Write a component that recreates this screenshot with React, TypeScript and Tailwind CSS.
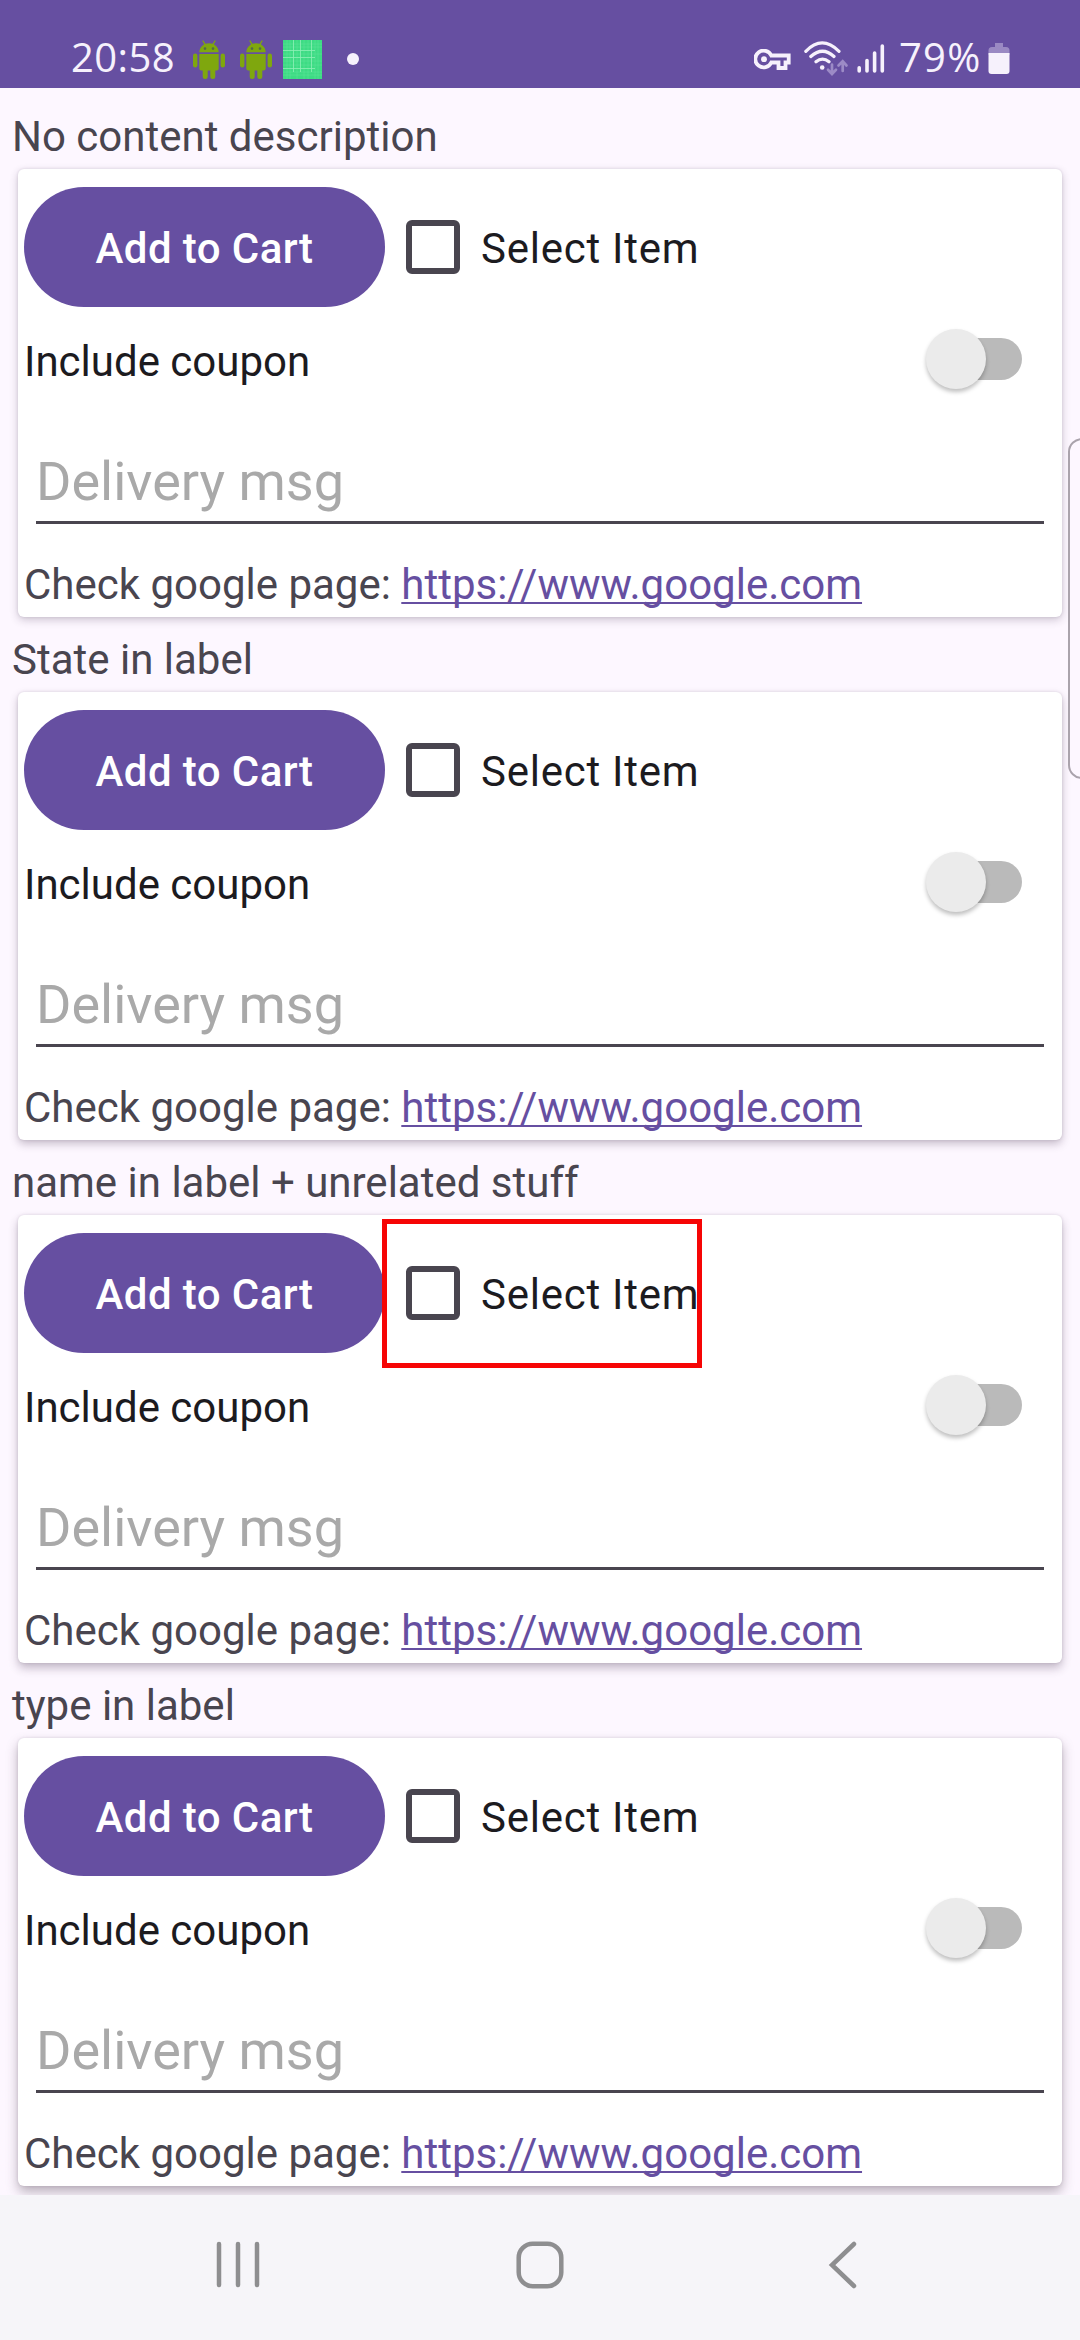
import React from 'react';

function AndroidBot() {
  return (
    <svg className="h-[40px] w-[34px] shrink-0" viewBox="0 0 34 40" fill="#7fa70e">
      <path d="M11 1l3 5M23 1l-3 5" stroke="#7fa70e" strokeWidth="1.3" strokeLinecap="round" fill="none" />
      <path d="M7.3 12.3C7.5 6.700 12 3.300 17 3.300S26.500 6.700 26.700 12.300Z" />
      <circle cx="13" cy="8.600" r="1.300" fill="#536a4c" />
      <circle cx="21" cy="8.600" r="1.300" fill="#536a4c" />
      <path d="M7.300 14H26.700V28.500Q26.700 30.500 24.700 30.500H23.300V36.500A2.500 2.500 0 0 1 18.300 36.500V30.500H15.700V36.500A2.500 2.500 0 0 1 10.700 36.500V30.500H9.300Q7.300 30.500 7.300 28.500Z" />
      <rect x="1" y="13.600" width="4.400" height="13.800" rx="2.200" />
      <rect x="28.600" y="13.600" width="4.400" height="13.800" rx="2.200" />
    </svg>
  );
}

function GridIcon() {
  return (
    <svg className="ml-[10px] h-[39px] w-[39px] shrink-0" viewBox="0 0 39 39">
      <rect width="39" height="39" fill="#3ddc84" />
      <path d="M4 0V39M7 0V39M14 0V39M21 0V39M25 0V39M32 0V39M35 0V39M0 4H39M0 7H39M0 14H39M0 21H39M0 25H39M0 32H39M0 35H39" stroke="#5be398" strokeWidth=".6" />
      <path d="M10.500 0V32M17.500 0V32M28.500 0V32M0 10.500H32M0 17.500H32M0 28.500H32" stroke="#8ff0b8" strokeWidth=".8" />
    </svg>
  );
}

function StatusBar() {
  return (
    <header className="flex h-[88px] shrink-0 items-start bg-[#664fa1] font-['Open_Sans'] text-[40px] leading-[40px] text-[#f6f1fc]">
      <span className="ml-[71px] mt-[37px] w-[121px] tracking-[0.4px]">20:58</span>
      <div className="mt-[40px] flex">
        <AndroidBot />
        <div className="ml-[13px] flex">
          <AndroidBot />
        </div>
        <GridIcon />
      </div>
      <div className="ml-[25px] mt-[53px] size-[12px] rounded-full bg-[#f6f1fc]" />
      <svg className="ml-auto mt-[49px] h-[22px] w-[37px]" viewBox="0 0 37 22" fill="none" stroke="#f6f1fc" strokeWidth="3.800">
        <path d="M17.300 6.500H34.700V13.500H31.500V19H24.500V13.500H17.300A8.400 8.400 0 1 1 17.300 6.500Z" />
        <circle cx="10" cy="10.200" r="2.900" fill="#f6f1fc" stroke="none" />
      </svg>
      <svg className="ml-[13px] mt-[41px] h-[36px] w-[45px]" viewBox="0 0 45 36" fill="none" stroke="#f6f1fc" strokeWidth="3.200" strokeLinecap="round">
        <path d="M1.800 10.300Q18 -6.500 35 10.300M6.800 15.500Q18.500 5 30 15.500M12 20.800Q18.500 15.300 25 20.800" />
        <circle cx="18.200" cy="26.500" r="2.300" fill="#f6f1fc" stroke="none" />
        <path d="M28 23.500V32M24 28.800L28 33L32 28.800M38.700 30V20.500M34.500 24.500L38.700 20.300L42.500 24.500" stroke="#9c8bc6" strokeWidth="2.700" />
      </svg>
      <svg className="ml-[8px] mt-[43px] h-[31px] w-[28px]" viewBox="0 0 28 31" stroke="#f6f1fc" strokeWidth="3.600" strokeLinecap="round">
        <path d="M2.200 24.800V28M10 17.500V28M17.600 10V28M25.300 3V28" />
      </svg>
      <span className="ml-[14px] mt-[37px] w-[89px] tracking-[1.2px]">79%</span>
      <svg className="mr-[70px] mt-[43px] h-[32px] w-[22px]" viewBox="0 0 22 32">
        <path d="M7 0H15V4H18Q21.500 4 21.500 7.500V12H.5V7.500Q.5 4 4 4H7Z" fill="#9a89c3" />
        <path d="M.5 10H21.500V28Q21.500 31 18.500 31H3.500Q.5 31 .5 28Z" fill="#f6f1fc" />
      </svg>
    </header>
  );
}

interface SectionProps {
  title: string;
  shadow: string;
  highlighted?: boolean;
}

function Section({ title, shadow, highlighted }: SectionProps) {
  return (
    <section className="h-[523px]">
      <h2 className="h-[75px] whitespace-nowrap pl-[12px] pt-[18px] text-[42px] leading-[50px] text-[#49454f]">{title}</h2>
      <div className={`ml-[18px] h-[448px] w-[1044px] rounded-[6px] bg-white pl-[6px] pt-[18px] ${shadow}`}>
        <div className="flex h-[120px] items-center">
          <button className="h-[120px] w-[361px] shrink-0 rounded-full bg-[#664fa1] pt-[3px] text-[42px] font-medium leading-[50px] tracking-[0.42px] text-white">
            Add to Cart
          </button>
          <label className="relative flex h-[54px] items-center">
            <span className="ml-[21px] size-[54px] rounded-[6px] border-[6px] border-[#49454f]" />
            <span className="ml-[21px] whitespace-nowrap pt-[3px] text-[42px] leading-[50px] tracking-[0.75px] text-[#1c1b1f]">Select Item</span>
            {highlighted && (
              <span className="absolute left-[-3px] top-[-47px] h-[149px] w-[320px] border-[5px] border-[#f60505]" />
            )}
          </label>
        </div>
        <div className="flex h-[110px] items-start justify-between pr-[40px]">
          <span className="pt-[30px] text-[42px] leading-[50px] text-[#1c1b1f]">Include coupon</span>
          <div className="mt-[31px] flex h-[42px] w-[84px] items-center rounded-full bg-[#bababa]">
            <span className="-ml-[12px] size-[60px] shrink-0 rounded-full bg-[#ebebeb] shadow-[0_3px_4px_rgba(0,0,0,0.25)]" />
          </div>
        </div>
        <div className="ml-[12px] h-[107px] w-[1008px] border-b-[3px] border-[#49454f] pt-[33px] text-[54px] leading-[64px] text-[#a9a9a9]">
          Delivery msg
        </div>
        <p className="whitespace-nowrap pt-[36px] text-[42px] leading-[50px] text-[#49454f]">
          Check google page:{' '}
          <a className="text-[#664fa1] underline decoration-[2px] underline-offset-[3px] [text-decoration-skip-ink:none]">https://www.google.com</a>
        </p>
      </div>
    </section>
  );
}

function NavigationBar() {
  return (
    <nav className="relative flex h-[145px] shrink-0 items-start bg-[#f6f5f9] pt-[45px]">
      <svg className="ml-[216px] h-[50px] w-[44px]" viewBox="0 0 44 50" stroke="#8e8e90" strokeWidth="4.500" strokeLinecap="round">
        <path d="M3 4V45M22 4V45M41 4V45" />
      </svg>
      <svg className="ml-[254px] h-[50px] w-[52px]" viewBox="0 0 52 50" fill="none" stroke="#8e8e90" strokeWidth="4.500">
        <rect x="4.700" y="3.700" width="42.600" height="42.600" rx="14" />
      </svg>
      <svg className="ml-[260px] h-[50px] w-[34px]" viewBox="0 0 34 50" fill="none" stroke="#8e8e90" strokeWidth="4.500" strokeLinecap="round">
        <path d="M28 4L6 25L28 46" />
      </svg>
    </nav>
  );
}

export default function App() {
  return (
    <div className="relative flex h-[2340px] w-[1080px] flex-col overflow-hidden bg-[#fdf7ff] font-['Roboto',sans-serif]">
      <StatusBar />
      <main className="h-[2107px] shrink-0 pt-[6px]">
        <Section title="No content description" shadow="shadow-[0_3px_8px_rgba(60,40,70,0.24),0_0_3px_rgba(60,40,70,0.14)]" />
        <Section title="State in label" shadow="shadow-[0_4px_9px_rgba(60,40,70,0.28),0_0_3px_rgba(60,40,70,0.14)]" />
        <Section title="name in label + unrelated stuff" highlighted shadow="shadow-[0_5px_10px_rgba(60,40,70,0.3),0_0_3px_rgba(60,40,70,0.14)]" />
        <Section title="type in label" shadow="shadow-[0_6px_12px_rgba(60,40,60,0.34),0_0_3px_rgba(60,40,70,0.14)]" />
      </main>
      <NavigationBar />
      <div className="absolute -right-[20px] top-[438px] h-[341px] w-[32px] rounded-[14px] border-2 border-[#aaa3ac] bg-[#fdf7ff]" />
    </div>
  );
}
